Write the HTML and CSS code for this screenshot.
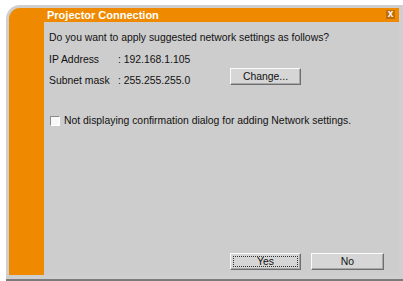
FILE: index.html
```html
<!DOCTYPE html>
<html>
<head>
<meta charset="utf-8">
<link rel="stylesheet" href="styles.css">
</head>
<body>
<div class="window">
  <div class="frame">
    <div class="titlebar">
      <span class="title">Projector Connection</span>
      <span class="close">x</span>
    </div>
    <div class="content">
      <p class="line">Do you want to apply suggested network settings as follows?</p>
      <div class="row ip">
        <span class="label">IP Address</span>
        <span class="value">: 192.168.1.105</span>
      </div>
      <div class="row subnet">
        <span class="label">Subnet mask</span>
        <span class="value">: 255.255.255.0</span>
        <span class="btn change">Change...</span>
      </div>
      <div class="row check">
        <span class="box"></span>
        <span class="checktext">Not displaying confirmation dialog for adding Network settings.</span>
      </div>
      <div class="actions">
        <span class="btn yes"><span class="focus">Yes</span></span>
        <span class="btn no">No</span>
      </div>
    </div>
  </div>
</div>
</body>
</html>
```
FILE: styles.css
```css
html, body {
  margin: 0;
  padding: 0;
  background: #ffffff;
}
body {
  width: 403px;
  height: 281px;
  overflow: hidden;
  font-family: "Liberation Sans", Arial, sans-serif;
  font-size: 10.4px;
  color: #111;
}
.window {
  margin: 5px 0 0 6px;
  width: 397px;
  height: 276px;
  box-sizing: border-box;
  background: #cfcfcf;
  border-top-left-radius: 14px;
  padding: 3px 4px 4px 3px;
  border-bottom: 2px solid #7c7c7c;
}
.frame {
  background: #ef8a00;
  border-top-left-radius: 11px;
  height: 267px;
  display: grid;
  grid-template-columns: 35px 1fr;
  grid-template-rows: 14px 1fr;
}
.titlebar {
  grid-column: 2;
  grid-row: 1;
  display: flex;
  align-items: center;
  justify-content: space-between;
  padding-left: 3px;
  padding-right: 4px;
}
.title {
  color: #fff;
  font-weight: bold;
  font-size: 11px;
  line-height: 14px;
}
.close {
  width: 9px;
  height: 9px;
  background: #c06c08;
  color: #fff;
  font-weight: bold;
  font-size: 10px;
  line-height: 8px;
  text-align: center;
  margin-top: -1px;
}
.content {
  grid-column: 2;
  grid-row: 2;
  background: #cdcdcd;
  padding: 9px 15px 5px 5px;
  display: flex;
  flex-direction: column;
}
.line {
  margin: 0;
  line-height: 14px;
}
.row {
  display: flex;
  line-height: 14px;
}
.ip {
  margin-top: 8px;
}
.subnet {
  margin-top: 1px;
  align-items: flex-start;
}
.subnet .label, .subnet .value {
  padding-top: 6px;
}
.label {
  width: 69px;
}
.subnet .value {
  width: 112px;
}
.btn {
  box-sizing: border-box;
  height: 17px;
  background: #d6d6d6;
  border: 1px solid;
  border-color: #fafafa #6e6e6e #6e6e6e #fafafa;
  box-shadow: inset -1px -1px 0 #a8a8a8;
  display: flex;
  align-items: center;
  justify-content: center;
  line-height: 13px;
}
.change {
  width: 71px;
}
.check {
  margin-top: 26px;
  align-items: center;
}
.box {
  width: 10px;
  height: 10px;
  box-sizing: border-box;
  background: #f8f8f8;
  border: 1px solid;
  border-color: #8a8a8a #ffffff #ffffff #8a8a8a;
  margin-left: 1px;
  margin-right: 4px;
}
.actions {
  margin-top: auto;
  display: flex;
  justify-content: flex-end;
  gap: 10px;
}
.yes {
  width: 71px;
  padding: 2px;
}
.focus {
  width: 100%;
  height: 100%;
  box-sizing: border-box;
  border: 1px dotted #333;
  display: flex;
  align-items: center;
  justify-content: center;
}
.no {
  width: 73px;
}
```
